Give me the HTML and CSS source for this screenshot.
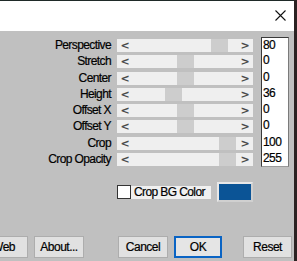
FILE: index.html
```html
<!DOCTYPE html>
<html lang="en">
<head>
  <meta charset="UTF-8">
  <title>Perspective</title>
  <link rel="stylesheet" href="styles.css">
</head>
<body>
  <div class="window">
    <!-- title bar -->
    <div class="titlebar">
      <svg class="close" width="11" height="11" viewBox="0 0 11 11">
        <path d="M0.5 0.5 L10.5 10.5 M10.5 0.5 L0.5 10.5" stroke="#111" stroke-width="1.1" fill="none"/>
      </svg>
    </div>

    <!-- dialog body -->
    <div class="dialog">
      <div class="params">
        <div class="label">Perspective</div>
        <div class="slider"><span class="arr">&lt;</span><div class="track"><div class="thumb" style="left: 78px"></div></div><span class="arr">&gt;</span></div>
        <div class="num first">80</div>

        <div class="label">Stretch</div>
        <div class="slider"><span class="arr">&lt;</span><div class="track"><div class="thumb" style="left: 44px"></div></div><span class="arr">&gt;</span></div>
        <div class="num">0</div>

        <div class="label">Center</div>
        <div class="slider"><span class="arr">&lt;</span><div class="track"><div class="thumb" style="left: 44px"></div></div><span class="arr">&gt;</span></div>
        <div class="num">0</div>

        <div class="label">Height</div>
        <div class="slider"><span class="arr">&lt;</span><div class="track"><div class="thumb" style="left: 32px"></div></div><span class="arr">&gt;</span></div>
        <div class="num">36</div>

        <div class="label">Offset X</div>
        <div class="slider"><span class="arr">&lt;</span><div class="track"><div class="thumb" style="left: 44px"></div></div><span class="arr">&gt;</span></div>
        <div class="num">0</div>

        <div class="label">Offset Y</div>
        <div class="slider"><span class="arr">&lt;</span><div class="track"><div class="thumb" style="left: 44px"></div></div><span class="arr">&gt;</span></div>
        <div class="num">0</div>

        <div class="label">Crop</div>
        <div class="slider"><span class="arr">&lt;</span><div class="track"><div class="thumb" style="left: 86px"></div></div><span class="arr">&gt;</span></div>
        <div class="num">100</div>

        <div class="label">Crop Opacity</div>
        <div class="slider"><span class="arr">&lt;</span><div class="track"><div class="thumb" style="left: 86px"></div></div><span class="arr">&gt;</span></div>
        <div class="num last">255</div>
      </div>

      <div class="bg-row">
        <span class="check"></span>
        <span class="check-label">Crop BG Color</span>
        <span class="swatch"><span class="swatch-fill"></span></span>
      </div>

      <div class="buttons">
        <button class="btn web">Web</button>
        <button class="btn about">About...</button>
        <button class="btn cancel">Cancel</button>
        <button class="btn ok">OK</button>
        <button class="btn reset">Reset</button>
      </div>
    </div>
  </div>
</body>
</html>
```

FILE: styles.css
```css
/* dialog */
body {
  margin: 0;
  padding: 0;
  background-color: #2b2222;
  font-family: "Liberation Sans", Arial, sans-serif;
  font-size: 12px;
  letter-spacing: -0.6px;
  color: #000;
}

.window {
  width: 294px;
  height: 261px;
  overflow: hidden;
  display: flex;
  flex-direction: column;
}

.titlebar {
  height: 30px;
  border-top: 1px solid #1f2a28;
  background-color: #ffffff;
  position: relative;
}
.close {
  position: absolute;
  left: 275px;
  top: 9px;
}

.dialog {
  flex: 1;
  background-color: #c0c0c0;
  padding-top: 6px;
}

.params {
  display: grid;
  grid-template-columns: 111px 136px 30px;
  grid-auto-rows: 16.3px;
  column-gap: 6px;
}
.label {
  text-align: right;
  line-height: 13px;
  margin-top: 2px;
  white-space: nowrap;
  -webkit-text-stroke: 0.2px #000;
}
.slider {
  height: 13px;
  margin-top: 2px;
  background-color: #efefef;
  display: flex;
  align-items: center;
}
.arr {
  width: 16px;
  text-align: center;
  font-family: "DejaVu Sans", sans-serif;
  font-size: 11px;
  font-weight: bold;
  line-height: 13px;
  color: #4a4a4a;
  letter-spacing: 0;
}
.track {
  flex: 1;
  height: 13px;
  position: relative;
}
.thumb {
  position: absolute;
  top: 0;
  width: 17px;
  height: 13px;
  background-color: #cdcdcd;
}
.num {
  margin-left: 2px;
  background-color: #ffffff;
  border-left: 1px solid #3a3a3a;
  border-right: 1px solid #7a7a7a;
  padding-left: 1px;
  line-height: 15px;
  -webkit-text-stroke: 0.2px #000;
}
.num.first {
  border-top: 1px solid #3a3a3a;
}
.num.last {
  border-bottom: 1px solid #9a9a9a;
}

.bg-row {
  display: flex;
  align-items: center;
  padding-left: 117px;
  margin-top: 15px;
  height: 20px;
}
.check {
  width: 12px;
  height: 12px;
  border: 1px solid #333;
  background-color: #ffffff;
}
.check-label {
  background-color: #f0f0f0;
  height: 13px;
  line-height: 13px;
  padding: 0 6px 0 3px;
  -webkit-text-stroke: 0.2px #000;
}
.swatch {
  margin-left: 6px;
  width: 32px;
  height: 16px;
  border: 2px solid #e8e8e8;
  border-right-color: #d0d0d0;
  border-bottom-color: #d0d0d0;
  display: flex;
}
.swatch-fill {
  flex: 1;
  background-color: #0b5496;
}

.buttons {
  display: flex;
  margin-top: 34px;
}
.btn {
  font-family: "Liberation Sans", Arial, sans-serif;
  font-size: 12px;
  letter-spacing: -0.5px;
  width: 49px;
  height: 22px;
  padding: 0;
  background-color: #e1e1e1;
  border: 1px solid #adadad;
  color: #000;
  -webkit-text-stroke: 0.2px #000;
}
.web { margin-left: -21px; }
.about { margin-left: 6px; width: 50px; }
.cancel { margin-left: 34px; width: 50px; }
.ok {
  margin-left: 6px;
  width: 48px;
  border: 2px solid #0a64c4;
  background-color: #e5e5e5;
}
.reset { margin-left: 21px; }
```
